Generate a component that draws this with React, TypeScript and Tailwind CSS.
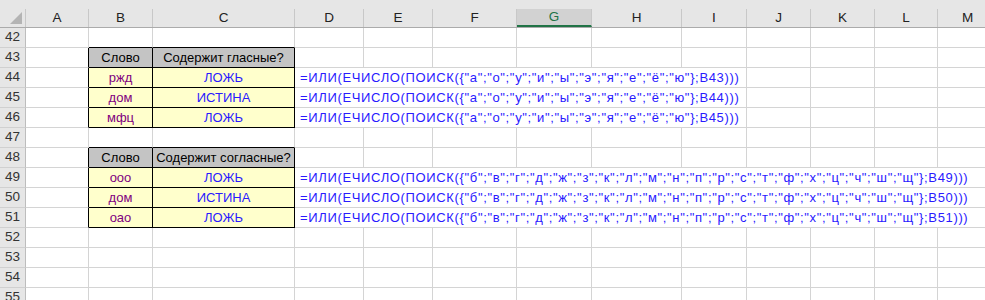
import React from "react";

const cols = ["A", "B", "C", "D", "E", "F", "G", "H", "I", "J", "K", "L", "M"];
const widths = [63, 64, 142, 69, 69, 84, 75, 90, 65, 64, 64, 63, 60];

const vowels = '=ИЛИ(ЕЧИСЛО(ПОИСК({"а";"о";"у";"и";"ы";"э";"я";"е";"ё";"ю"};B';
const cons =
  '=ИЛИ(ЕЧИСЛО(ПОИСК({"б";"в";"г";"д";"ж";"з";"к";"л";"м";"н";"п";"р";"с";"т";"ф";"х";"ц";"ч";"ш";"щ"};B';

type Row = {
  n: number;
  kind: "empty" | "head" | "data";
  word?: string;
  val?: string;
  head?: string;
  formula?: string;
  span?: number;
  topBlack?: boolean;
};

const rows: Row[] = [
  { n: 42, kind: "empty", topBlack: true },
  { n: 43, kind: "head", head: "Содержит гласные?" },
  { n: 44, kind: "data", word: "ржд", val: "ЛОЖЬ", formula: vowels + "43)))", span: 6 },
  { n: 45, kind: "data", word: "дом", val: "ИСТИНА", formula: vowels + "44)))", span: 6 },
  { n: 46, kind: "data", word: "мфц", val: "ЛОЖЬ", formula: vowels + "45)))", span: 6 },
  { n: 47, kind: "empty", topBlack: true },
  { n: 48, kind: "head", head: "Содержит согласные?" },
  { n: 49, kind: "data", word: "ооо", val: "ЛОЖЬ", formula: cons + "49)))", span: 10 },
  { n: 50, kind: "data", word: "дом", val: "ИСТИНА", formula: cons + "50)))", span: 10 },
  { n: 51, kind: "data", word: "оао", val: "ЛОЖЬ", formula: cons + "51)))", span: 10 },
  { n: 52, kind: "empty" },
  { n: 53, kind: "empty" },
  { n: 54, kind: "empty" },
  { n: 55, kind: "empty" },
];

const font = { fontFamily: '"Liberation Sans", Arial, sans-serif' };

function RowView({ r }: { r: Row }) {
  const inTable = r.kind !== "empty";
  const rowHdr = (
    <div className="w-[26px] shrink-0 h-full flex items-center justify-center bg-[#e6e6e6] border-r border-r-[#bdbdbd] border-b border-b-[#d0d0d0] text-[13.5px] text-[#333]">
      {r.n}
    </div>
  );
  const aCell = (
    <div
      className={
        inTable
          ? "w-[63px] shrink-0 h-full border-r border-r-black border-b border-b-[#d4d4d4]"
          : "w-[63px] shrink-0 h-full border-r border-r-[#d4d4d4] border-b border-b-[#d4d4d4]"
      }
    />
  );
  let bCell: React.ReactNode;
  let cCell: React.ReactNode;
  if (r.kind === "empty") {
    bCell = (
      <div
        className={
          r.topBlack
            ? "w-[64px] shrink-0 h-full border-r border-r-[#d4d4d4] border-b border-b-black"
            : "w-[64px] shrink-0 h-full border-r border-r-[#d4d4d4] border-b border-b-[#d4d4d4]"
        }
      />
    );
    cCell = (
      <div
        className={
          r.topBlack
            ? "w-[142px] shrink-0 h-full border-r border-r-[#d4d4d4] border-b border-b-black"
            : "w-[142px] shrink-0 h-full border-r border-r-[#d4d4d4] border-b border-b-[#d4d4d4]"
        }
      />
    );
  } else if (r.kind === "head") {
    bCell = (
      <div className="w-[64px] shrink-0 h-full flex items-center justify-center bg-[#c4c4c4] border-r border-r-black border-b border-b-black text-[13px] text-black">
        Слово
      </div>
    );
    cCell = (
      <div className="w-[142px] shrink-0 h-full flex items-center justify-center bg-[#c4c4c4] border-r border-r-black border-b border-b-black text-[13px] text-black whitespace-nowrap">
        {r.head}
      </div>
    );
  } else {
    bCell = (
      <div className="w-[64px] shrink-0 h-full flex items-center justify-center bg-[#ffffcc] border-r border-r-black border-b border-b-black text-[13px] text-[#800080]">
        {r.word}
      </div>
    );
    cCell = (
      <div className="w-[142px] shrink-0 h-full flex items-center justify-center bg-[#ffffcc] border-r border-r-black border-b border-b-black text-[13px] text-[#2a1aff]">
        {r.val}
      </div>
    );
  }

  const rest: React.ReactNode[] = [];
  if (r.formula && r.span) {
    const w = widths.slice(3, 3 + r.span).reduce((a, b) => a + b, 0);
    rest.push(
      <div
        key="f"
        className="shrink-0 h-full flex items-center pl-[5px] whitespace-nowrap overflow-visible border-r border-r-[#d4d4d4] border-b border-b-[#d4d4d4] text-[13px] tracking-[0.65px] text-[#2a1aff]"
        style={{ width: w }}
      >
        {r.formula}
      </div>
    );
    for (let i = 3 + r.span; i < widths.length; i++) {
      rest.push(
        <div
          key={i}
          className="shrink-0 h-full border-r border-r-[#d4d4d4] border-b border-b-[#d4d4d4]"
          style={{ width: widths[i] }}
        />
      );
    }
  } else {
    for (let i = 3; i < widths.length; i++) {
      rest.push(
        <div
          key={i}
          className="shrink-0 h-full border-r border-r-[#d4d4d4] border-b border-b-[#d4d4d4]"
          style={{ width: widths[i] }}
        />
      );
    }
  }

  return (
    <div className="flex h-[20px]">
      {rowHdr}
      {aCell}
      {bCell}
      {cCell}
      {rest}
    </div>
  );
}

export default function App() {
  return (
    <div className="w-[985px] h-[300px] overflow-hidden bg-white" style={font}>
      <div className="h-[9px] bg-[#e6e6e6]" />
      <div className="flex h-[19px] bg-[#e6e6e6] border-b border-b-[#ababab]">
        <div className="w-[26px] shrink-0 h-full relative border-r border-r-[#c8c8c8]">
          <svg className="absolute right-[3px] bottom-[3px]" width="12" height="12" viewBox="0 0 12 12">
            <polygon points="12,0 12,12 0,12" fill="#b4b4b4" />
          </svg>
        </div>
        {cols.map((c, i) =>
          c === "G" ? (
            <div
              key={c}
              className="shrink-0 h-full flex items-center justify-center bg-[#d2d2d2] border-r border-r-[#c8c8c8] border-b-2 border-b-[#217346] text-[13.5px] text-[#217346]"
              style={{ width: widths[i] }}
            >
              {c}
            </div>
          ) : (
            <div
              key={c}
              className="shrink-0 h-full flex items-center justify-center border-r border-r-[#c8c8c8] text-[13.5px] text-[#222]"
              style={{ width: widths[i] }}
            >
              {c}
            </div>
          )
        )}
      </div>
      {rows.map((r) => (
        <RowView key={r.n} r={r} />
      ))}
    </div>
  );
}
